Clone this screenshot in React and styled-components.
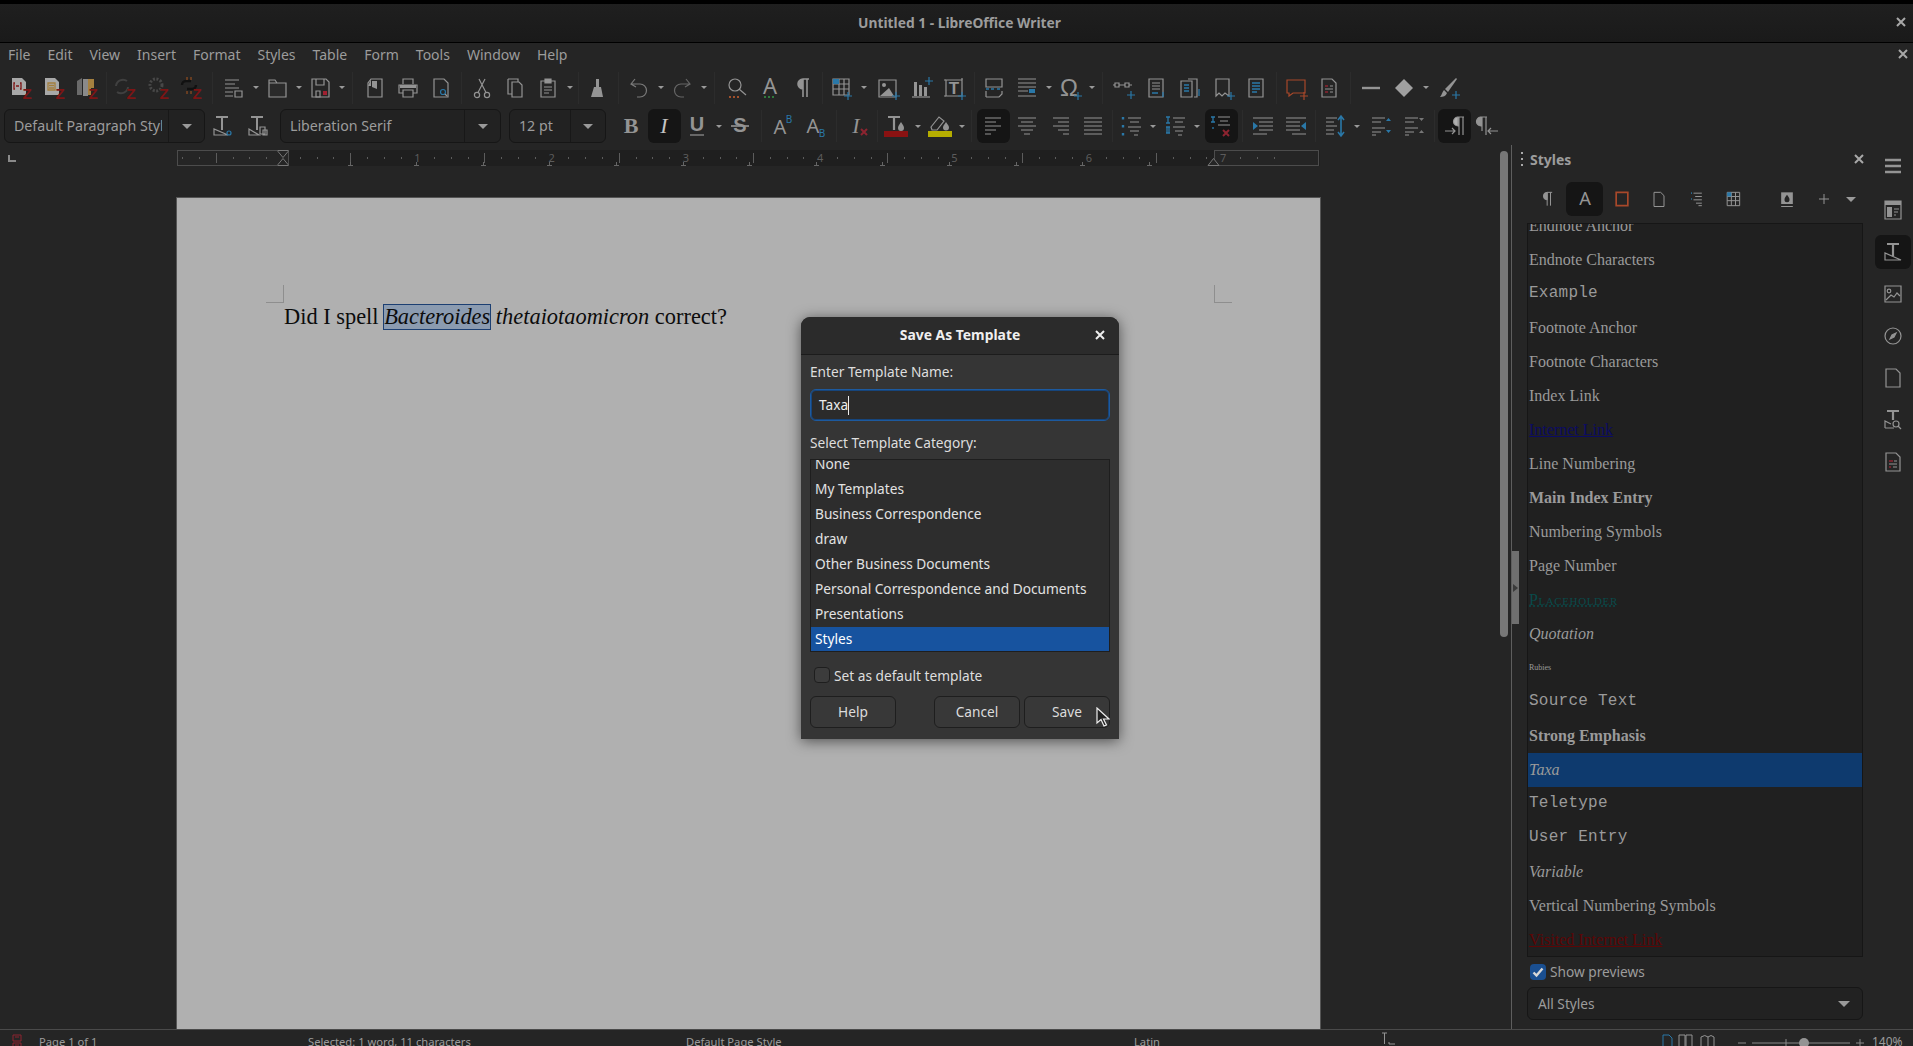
import styled, { createGlobalStyle } from "styled-components";

const UI_FONT = '"Noto Sans", "Open Sans", sans-serif';
const SERIF = '"Liberation Serif", serif';
const MONO = '"Liberation Mono", monospace';
const BLUE = "#2a78a8";
const RED = "#7d1414";
const TXT = "#9c9c9c";

const Global = createGlobalStyle`
  html, body { margin: 0; padding: 0; background: #252525; overflow: hidden; }
  body { font-family: ${UI_FONT}; color: ${TXT}; }
`;

const Shell = styled.div`
  position: relative;
  width: 1913px;
  height: 1046px;
  display: flex;
  flex-direction: column;
  overflow: hidden;
  background: #252525;
`;

const TitleBar = styled.div`
  height: 36px;
  box-sizing: content-box;
  border-top: 4px solid #000;
  border-bottom: 1px solid #000;
  background: linear-gradient(#1f1f1f, #1a1a1a);
  display: grid;
  grid-template-columns: 1fr auto 1fr;
  align-items: center;
  font-size: 13.8px;
  font-weight: 700;
  padding: 0 7px 2px 13px;
  margin-bottom: -2px;
`;
const CloseGlyph = styled.svg`
  width: 10px;
  height: 10px;
  stroke: ${(p) => p.$color || "#a8a8a8"};
  stroke-width: 2;
  justify-self: end;
  flex: none;
`;
const Cross = ({ color }) => (
  <CloseGlyph $color={color} viewBox="0 0 10 10"><path d="M1 1l8 8M9 1l-8 8" /></CloseGlyph>
);

const MenuBar = styled.div`
  height: 27px;
  box-sizing: border-box;
  padding: 0 5px 1px 8px;
  display: flex;
  align-items: center;
  gap: 17px;
  font-size: 14px;
`;
const MenuEnd = styled.div`
  margin-left: auto;
  display: flex;
`;

const ToolRow = styled.div`
  height: ${(p) => p.$h}px;
  display: flex;
  align-items: center;
  padding-left: ${(p) => p.$pad}px;
`;
const Slot = styled.div`
  width: ${(p) => p.$w || 33}px;
  height: 34px;
  flex: none;
  display: flex;
  align-items: center;
  justify-content: center;
  border-radius: 6px;
  background: ${(p) => (p.$on ? "#151515" : "transparent")};
`;
const Tri = styled.span`
  width: 0;
  height: 0;
  flex: none;
  border-left: ${(p) => p.$s || 4}px solid transparent;
  border-right: ${(p) => p.$s || 4}px solid transparent;
  border-top: ${(p) => p.$s || 4}px solid ${(p) => p.$color || "#9a9a9a"};
`;
const Drop = styled.div`
  width: 10px;
  flex: none;
  display: flex;
  justify-content: center;
`;
const Sep = styled.div`
  width: ${(p) => p.$w}px;
  flex: none;
  height: 32px;
  position: relative;
  display: flex;
  justify-content: center;
  &::after {
    content: "";
    width: 1px;
    background: ${(p) => (p.$line ? "#2c2c2c" : "transparent")};
  }
`;
const Combo = styled.div`
  width: ${(p) => p.$w}px;
  height: 34px;
  flex: none;
  box-sizing: border-box;
  display: flex;
  margin-left: ${(p) => p.$ml || 0}px;
  margin-right: ${(p) => p.$mr || 0}px;
  background: #222;
  border: 1px solid #161616;
  border-radius: 6px;
  font-size: 14.2px;
`;
const ComboText = styled.div`
  flex: 1;
  min-width: 0;
  margin-left: 9px;
  margin-right: 6px;
  line-height: 32px;
  white-space: nowrap;
  overflow: hidden;
`;
const ComboArrow = styled.div`
  width: ${(p) => p.$w}px;
  flex: none;
  border-left: 1px solid #181818;
  display: flex;
  align-items: center;
  justify-content: center;
`;

const Workspace = styled.div`
  flex: 1;
  min-height: 0;
  display: flex;
`;
const DocColumn = styled.div`
  width: 1497px;
  flex: none;
  display: flex;
  flex-direction: column;
  overflow: hidden;
`;
const RulerRow = styled.div`
  height: 16px;
  margin-top: 5px;
  display: flex;
  align-items: flex-start;
`;
const TabCorner = styled.div`
  width: 6px;
  height: 5px;
  margin: 5px 161px 0 8px;
  border-left: 2px solid #8a8a8a;
  border-bottom: 2px solid #8a8a8a;
  flex: none;
`;
const Page = styled.div`
  position: relative;
  margin: 31px 0 0 176px;
  width: 1145px;
  flex: 1;
  box-sizing: border-box;
  background: #b0b0b0;
  border: 1px solid #555;
  border-bottom: 0;
  padding: 105px 0 0 107px;
  font: 22.4px/26px ${SERIF};
  color: #0c0c0c;
`;
const Corner = styled.div`
  position: absolute;
  top: 87px;
  left: ${(p) => p.$left}px;
  width: 18px;
  height: 18px;
  border-bottom: 1px solid #8e8e8e;
  ${(p) => (p.$side === "l" ? "border-right" : "border-left")}: 1px solid #8e8e8e;
  box-sizing: border-box;
`;
const DocLine = styled.div`
  white-space: nowrap;
  margin-top: 1px;
`;
const Selected = styled.em`
  background: #8b9bb0;
  outline: 1px solid #1c3f72;
  outline-offset: -1px;
  padding: 0 1px;
  margin: 0 -1px;
  display: inline-block;
  height: 26px;
`;

const ScrollTrack = styled.div`
  width: 14px;
  flex: none;
  padding: 6px 3px 0;
  box-sizing: border-box;
`;
const ScrollThumb = styled.div`
  width: 8px;
  height: 486px;
  background: #777;
  border-radius: 4px;
`;

const Sidebar = styled.div`
  position: relative;
  width: 362px;
  flex: none;
  box-sizing: border-box;
  border-left: 1px solid #5e5e5e;
  padding: 0 10px 0 15px;
  display: flex;
  flex-direction: column;
`;
const Sash = styled.div`
  position: absolute;
  left: 0;
  top: 406px;
  width: 7px;
  height: 73px;
  background: #6f6f6f;
  display: flex;
  align-items: center;
  &::after {
    content: "";
    border-left: 5px solid #3a3a3a;
    border-top: 4px solid transparent;
    border-bottom: 4px solid transparent;
    margin-left: 1px;
  }
`;
const PanelHead = styled.div`
  height: 30px;
  box-sizing: border-box;
  display: flex;
  align-items: center;
  margin-left: -6px;
  padding-bottom: 2px;
  font-size: 14px;
  font-weight: 700;
`;
const Grip = styled.div`
  width: 2px;
  height: 14px;
  margin-right: 7px;
  background: repeating-linear-gradient(#aaa 0 2px, transparent 2px 6px);
`;
const PanelClose = styled.div`
  margin-left: auto;
  margin-right: -1px;
  display: flex;
`;
const StyleTools = styled.div`
  height: 48px;
  padding-top: 7px;
  box-sizing: border-box;
  display: flex;
  margin-left: 2px;
`;
const StyleSlot = styled(Slot)`
  width: ${(p) => p.$w || 37}px;
  height: 34px;
  margin-left: ${(p) => p.$ml || 0}px;
`;
const StyleList = styled.div`
  height: 734px;
  flex: none;
  box-sizing: border-box;
  border: 1px solid #161616;
  background: #202020;
  overflow: hidden;
`;
const StyleListInner = styled.div`
  margin-top: -15px;
`;
const StyleRow = styled.div`
  height: 34px;
  line-height: 33px;
  padding-left: 1px;
  white-space: nowrap;
  font-family: ${(p) => (p.$mono ? MONO : SERIF)};
  font-size: ${(p) => p.$size || 16}px;
  letter-spacing: ${(p) => (p.$mono ? "0.25px" : p.$caps ? "0.6px" : "0")};
  font-weight: ${(p) => (p.$bold ? 700 : 400)};
  font-style: ${(p) => (p.$italic ? "italic" : "normal")};
  font-variant: ${(p) => (p.$caps ? "small-caps" : "normal")};
  color: ${(p) => p.$color || "#9a9a9a"};
  text-decoration: ${(p) => p.$deco || "none"};
  background: ${(p) => (p.$on ? "#0e3a6e" : "transparent")};
`;
const PreviewRow = styled.label`
  height: 29px;
  display: flex;
  align-items: center;
  gap: 4px;
  padding-left: 3px;
  margin-bottom: 1px;
  font-size: 13.7px;
`;
const CheckOn = styled.span`
  width: 16px;
  height: 16px;
  border-radius: 4px;
  background: #1a4f91;
  display: flex;
  align-items: center;
  justify-content: center;
`;
const FilterBox = styled.div`
  height: 33px;
  box-sizing: border-box;
  border: 1px solid #161616;
  border-radius: 6px;
  background: #222;
  display: flex;
  align-items: center;
  justify-content: space-between;
  padding: 0 12px 0 10px;
  font-size: 13.7px;
`;

const Deck = styled.div`
  flex: 1;
  display: flex;
  flex-direction: column;
  align-items: center;
  padding-top: 4px;
  gap: 8px;
`;
const DeckItem = styled.div`
  width: 36px;
  height: 34px;
  flex: none;
  margin-bottom: ${(p) => p.$mb || 0}px;
  border-radius: 6px;
  display: flex;
  align-items: center;
  justify-content: center;
  background: ${(p) => (p.$on ? "#151515" : "transparent")};
`;

const StatusBar = styled.div`
  height: 17px;
  flex: none;
  box-sizing: border-box;
  border-top: 1px solid #4a4a4a;
  display: grid;
  grid-template-columns: 308px 378px 448px 247px 272px 75px 144px 41px;
  overflow: hidden;
  font-size: 11.2px;
  line-height: 24px;
`;
const StatusCell = styled.div`
  display: flex;
  align-items: flex-start;
  white-space: nowrap;
  padding-left: ${(p) => p.$pad || 0}px;
  gap: ${(p) => p.$gap || 0}px;
`;
const ZoomValue = styled.span`
  color: ${TXT};
  font-size: 12px;
`;

// dialog floats over the dimmed window
const Dialog = styled.div`
  position: absolute;
  left: 801px;
  top: 317px;
  width: 318px;
  height: 422px;
  box-sizing: border-box;
  background: #353535;
  border-radius: 9px 9px 0 0;
  box-shadow: 0 2px 14px rgba(0, 0, 0, 0.55);
  color: #dedede;
  font-size: 13.7px;
  display: flex;
  flex-direction: column;
`;
const DialogHead = styled.div`
  height: 38px;
  flex: none;
  box-sizing: border-box;
  background: #2b2b2b;
  border-bottom: 1px solid #1c1c1c;
  border-radius: 9px 9px 0 0;
  display: grid;
  grid-template-columns: 1fr auto 1fr;
  align-items: center;
  padding: 0 14px 2px 14px;
  font-size: 13.9px;
  font-weight: 700;
  color: #efefef;
`;
const DialogBody = styled.div`
  flex: 1;
  padding: 8px 9px 10px 9px;
  display: flex;
  flex-direction: column;
`;
const FieldLabel = styled.div`
  height: 20px;
  line-height: 18px;
  margin-bottom: ${(p) => p.$mb}px;
`;
const NameEntry = styled.div`
  height: 32px;
  box-sizing: border-box;
  border: 1px solid #1d5a9f;
  box-shadow: inset 0 0 0 1px #16457c;
  border-radius: 6px;
  background: #2b2b2b;
  padding-left: 8px;
  line-height: 29px;
  margin-bottom: 13px;
  color: #ececec;
  display: flex;
`;
const Caret = styled.span`
  width: 1px;
  height: 19px;
  margin-top: 6px;
  background: #eee;
`;
const CategoryList = styled.div`
  height: 193px;
  box-sizing: border-box;
  border: 1px solid #1e1e1e;
  background: #2d2d2d;
  overflow: hidden;
  margin-bottom: 15px;
`;
const CategoryInner = styled.div`
  margin-top: -8px;
`;
const CategoryRow = styled.div`
  height: 25px;
  line-height: 24px;
  padding-left: 4px;
  white-space: nowrap;
  background: ${(p) => (p.$on ? "#17539f" : "transparent")};
  color: ${(p) => (p.$on ? "#fff" : "#e2e2e2")};
`;
const CheckLine = styled.div`
  height: 16px;
  display: flex;
  align-items: center;
  gap: 4px;
  padding-left: 4px;
  margin-bottom: 13px;
`;
const CheckOff = styled.span`
  width: 16px;
  height: 16px;
  box-sizing: border-box;
  border: 1px solid #1e1e1e;
  border-radius: 4px;
  background: #3c3c3c;
`;
const ButtonRow = styled.div`
  display: flex;
  gap: 4px;
`;
const DialogButton = styled.div`
  position: relative;
  width: ${(p) => p.$w}px;
  margin-right: ${(p) => p.$mr || 0}px;
  height: 32px;
  box-sizing: border-box;
  border: 1px solid #1e1e1e;
  border-radius: 6px;
  background: #383838;
  text-align: center;
  line-height: 29px;
  color: #dcdcdc;
`;
const Pointer = styled.svg`
  position: absolute;
  left: 71px;
  top: 10px;
  width: 14px;
  height: 20px;
`;

const Ico = styled.svg`
  width: ${(p) => p.$size || 24}px;
  height: ${(p) => p.$size || 24}px;
  flex: none;
  fill: none;
  stroke: ${(p) => p.$stroke || "#949494"};
  stroke-width: 1.2;
  overflow: visible;
`;

const INK = "#949494";
const Letter = ({ x = 12, y = 18, s = 18, c = INK, w = 400, i, f = SERIF, children }) => (
  <text x={x} y={y} fontSize={s} fill={c} stroke="none" fontWeight={w} fontStyle={i ? "italic" : "normal"} fontFamily={f} textAnchor="middle">{children}</text>
);
const Zed = () => <Letter x={18} y={23} s={15} w={700} c={RED} f='"Liberation Sans", sans-serif'>Z</Letter>;
const Plus = ({ x = 20, y = 20, c = BLUE }) => <path d={`M${x - 4} ${y}h8M${x} ${y - 4}v8`} stroke={c} />;
const L = ({ d, c = BLUE, w = 1.3 }) => <path d={d} stroke={c} strokeWidth={w} />;

const ICONS = {
  zcite: <><path d="M3 2h10l4 4v13H3z" fill="#a8a8a8" stroke="none" /><L d="M6 7H5v6h1M11 7h1v6h-1M7 10h3" c="#7d1414" /><Zed /></>,
  zbib: <><path d="M3 2h10l4 4v13H3z" fill="#a8a8a8" stroke="none" /><L d="M6 7h7v7H6zM7 9.5h5M7 12h5" c="#a37e3c" /><Zed /></>,
  zdoc: <><path d="M2 5l5-3v17H2z" fill="#6a6a6a" stroke="none" /><path d="M8 3h5v17H8z" fill="#8a8a8a" stroke="none" /><path d="M13 3h6v9h-3v7h-3z" fill="#a5803f" stroke="none" /><Zed /></>,
  zrefresh: <><path d="M3 10a7 7 0 0 1 11-5M15 11a7 7 0 0 1-11 5" stroke="#404040" strokeWidth="2" /><Zed /></>,
  zprefs: <><circle cx="10" cy="9" r="6" stroke="#484848" strokeWidth="3" strokeDasharray="2 1.5" /><Zed /></>,
  zunlink: <><path d="M3 9a4 4 0 0 1 4-4h5M17 9a4 4 0 0 1-4 4H8" stroke="#111" strokeWidth="2.4" /><L d="M8 1v3M12 1v3M8 15v3M12 15v3" c="#8a4a20" /><Zed /></>,
  styles: <path d="M3 4h14M3 8h10M3 12h14M3 16h8M3 20h8M13 15h7v6h-7z" />,
  open: <path d="M4 4h6l2 3h9v14H4zM4 7h8" fill="#2a2a2a" />,
  save: <><path d="M4 3h14l3 3v15H4zM8 3v6h8V3" /><path d="M8 15h4v6H8z" /><rect x="15" y="15" width="4" height="4" fill="#a02030" stroke="none" /></>,
  pdf: <><path d="M8 3h11v18H5V7z" /><path d="M8 3v7H5l3-7zM9 5h5v8l-5-2z" fill={INK} stroke="none" /></>,
  print: <><path d="M7 8V3h10v5M7 17H3V9h18v8h-4M7 14h10v7H7z" /><path d="M4 9h16v3H4z" fill={INK} stroke="none" /></>,
  preview: <><path d="M5 3h10l4 4v14H5z" /><circle cx="14" cy="16" r="2.5" stroke={BLUE} /><path d="M16 18l2 2" /></>,
  cut: <><circle cx="7" cy="19" r="2.6" /><circle cx="17" cy="19" r="2.6" /><path d="M8 16.5L15 3M16 16.5L9 3" /></>,
  copy: <path d="M5 3h10v3M5 3v15h4M9 6h7l3 3v12H9z" />,
  paste: <><path d="M5 5h14v16H5z" /><path d="M9 3h6v4H9z" fill={INK} /><path d="M8 11h8M8 14h8M8 17h5" /></>,
  clone: <><path d="M10 3h3v8h-3z" fill={INK} stroke="none" /><path d="M8 11h7l2 10H5z" fill={INK} stroke="none" /></>,
  undo: <path d="M8 3L4 8l5 3M4 8h9a6 6 0 0 1 0 13h-3" stroke="#7a7a7a" />,
  redo: <path d="M16 3l4 5-5 3M20 8h-9a6 6 0 0 0 0 13h3" stroke="#666" />,
  find: <><circle cx="10" cy="9" r="6" /><path d="M14 13l7 6" /><L d="M4 21h2M8 21h2M12 21h2" c="#a0502c" w={2} /></>,
  charfmt: <><Letter y={18} s={22} f={UI_FONT}>A</Letter><L d="M6 21h2M10 21h2M14 21h2" c="#2f7a3c" w={2} /></>,
  pilcrow: <path d="M12 3h6M12 3v18M16 3v18M12 3a5 5 0 0 0 0 10z" fill={INK} strokeWidth="1.6" />,
  table: <><path d="M3 3h16v16H3zM3 8h16M3 13h16M9 3v16M14 3v16" /><rect x="3" y="3" width="6" height="5" fill={BLUE} stroke="none" /><Plus x={18} y={20} /></>,
  image: <><path d="M3 4h17v17H3z" /><circle cx="8" cy="9" r="2" fill={INK} stroke="none" /><path d="M4 20l9-8 5 8z" fill={INK} stroke="none" /><Plus x={20} y={20} /></>,
  chart: <><path d="M3 21h18" /><path d="M5 6h3v14H5zM10 9h3v11h-3zM15 11h3v9h-3z" fill={INK} stroke="none" /><Plus x={20} y={5} /></>,
  textbox: <><path d="M4 4h16v16H4z" /><path d="M2 4h2M20 2v2M2 20h2" /><Letter y={18} s={17} w={700} f='"Liberation Sans", sans-serif'>T</Letter><Plus x={20} y={20} /></>,
  pagebreak: <><path d="M4 3h16v8H4zM4 21V15M20 15v3l-3 3H4" /><L d="M4 13h3M9 13h3M15 13h3" /></>,
  field: <><path d="M3 3h18M3 7h18M3 11h18M3 15h10M3 20h18" /><rect x="14" y="13" width="6" height="4" fill={BLUE} stroke="none" /></>,
  omega: <><Letter x={11} y={20} s={24} f='"Liberation Sans", sans-serif'>Ω</Letter><Plus x={20} y={20} /></>,
  hyperlink: <><path d="M3 7h4v4H3zM13 7h4v4h-4zM7 9h6M1 9h2M17 9h3" /><Plus x={19} y={19} /></>,
  footnote: <><path d="M4 3h14v18H4zM7 7h8M7 10h8M7 13h8" /><L d="M7 17h6M18 16v5" /></>,
  endnote: <><path d="M10 3h9v18h-3M3 5h11v16H3z" /><L d="M6 9h5M6 12h5M6 15h5M21 13v7" /></>,
  bookmark: <><path d="M5 3h13v17l-4-3-3 3-3-3-3 3z" /><Plus x={20} y={20} /></>,
  crossref: <><path d="M5 3h14v18H5z" /><L d="M8 7h8M8 10h8M8 13h8M8 16h5" /></>,
  comment: <><path d="M3 4h18v13H9l-4 3v-3H3z" stroke="#a8482a" /><Plus x={20} y={20} c="#a8482a" /></>,
  track: <><path d="M5 3h10l4 4v14H5z" /><L d="M8 10h3M8 16h3" c="#8d2430" /><path d="M13 10h3M13 16h3M8 13h8" /></>,
  line: <path d="M3 12h18" strokeWidth="2.4" />,
  diamond: <path d="M12 3l9 9-9 9-9-9z" fill="#a0a0a0" stroke="none" />,
  brush: <><path d="M20 2L9 13l3 3L21 3z" fill={INK} stroke="none" /><path d="M8 14l3 3c-1 3-4 4-7 4 2-2 2-5 4-7z" fill={INK} stroke="none" /><Plus x={20} y={19} /></>,
  t1: <><path d="M5 3h12M11 3v13" strokeWidth="2" /><path d="M3 21h14L3 15z" /><circle cx="18" cy="19" r="2" stroke={BLUE} /></>,
  t2: <><path d="M5 3h12M11 3v13" strokeWidth="2" /><path d="M3 21h10L3 15z" /><path d="M14 13h5v7h-5zM17 16h4v5h-4z" /></>,
  bold: <Letter y={19} s={22} w={700}>B</Letter>,
  italic: <Letter y={19} s={22} i c="#c4c4c4">I</Letter>,
  under: <><Letter y={17} s={20} w={700} f='"Liberation Sans", sans-serif'>U</Letter><path d="M5 21h14" /></>,
  strike: <><Letter y={18} s={20} w={700} f='"Liberation Sans", sans-serif'>S</Letter><path d="M3 12h18" strokeWidth="1.6" /></>,
  sup: <><Letter x={10} y={20} s={20} f={UI_FONT}>A</Letter><Letter x={19} y={9} s={10} c={BLUE} f={UI_FONT}>B</Letter></>,
  sub: <><Letter x={10} y={19} s={20} f={UI_FONT}>A</Letter><Letter x={19} y={23} s={10} c={BLUE} f={UI_FONT}>B</Letter></>,
  clear: <><Letter x={10} y={19} s={22} i>I</Letter><L d="M15 15l6 6M21 15l-6 6" c="#8d2430" w={2} /></>,
  color: <><path d="M4 3h12M10 3v13" strokeWidth="2.2" /><path d="M17 8c2 3 3 4 3 6a3 3 0 0 1-6 0c0-2 1-3 3-6z" fill={INK} stroke="none" /><rect x="0" y="17" width="24" height="6" fill="#8a1212" stroke="none" /></>,
  marker: <><path d="M3 13L11 3l5 4-7 9H4z" /><path d="M18 8c2 3 3 4 3 5.500a3 3 0 0 1-6 0c0-1.500 1-2.500 3-5.500z" fill={INK} stroke="none" /><rect x="0" y="17" width="24" height="6" fill="#b5ad00" stroke="none" /></>,
  aleft: <path d="M3 4h16M3 8h11M3 12h16M3 16h11M3 20h6" />,
  acenter: <path d="M3 4h18M6 8h12M3 12h18M6 16h12M9 20h6" />,
  aright: <path d="M5 4h16M10 8h11M5 12h16M10 16h11M15 20h6" />,
  ajust: <path d="M3 4h18M3 8h18M3 12h18M3 16h18M3 20h18" />,
  bullets: <><path d="M8 4h13M10 8h9M8 13h13M10 17h9M14 21h4" /><L d="M3 3v2.500M3 11v2.500M3 19v2.500" w={2.4} /></>,
  number: <><path d="M9 4h12M11 8h8M9 13h12M11 17h8M14 21h4" /><L d="M2 3h4M4 3v6M2 9h4M2 13h4M3 13v6M5 13v6M2 19h4" /></>,
  outline: <><path d="M9 3h12M11 7h8M9 11h12" /><L d="M2 3h4M4 3v5M2 8h4M4 13v2" /><L d="M14 16l6 6M20 16l-6 6" c="#8d2430" w={2} /></>,
  indent: <><path d="M2 4h20M8 8h14M8 12h14M8 16h14M2 20h14" /><path d="M2 8l5 4-5 4z" fill={BLUE} stroke="none" /></>,
  outdent: <><path d="M2 4h20M2 8h14M2 12h14M2 16h14M8 20h14" /><path d="M22 8l-5 4 5 4z" fill={BLUE} stroke="none" /></>,
  spacing: <><path d="M3 4h11M3 8h8M3 12h11M3 16h8M3 20h8" /><L d="M18 3v18M15 6l3-4 3 4M15 18l3 4 3-4" w={1.6} /></>,
  incp: <><path d="M3 4h13M3 8h9M3 14h13M3 18h9M3 21h4" /><path d="M17 7l2.500-3L22 7zM17 16l2.500 3 2.500-3z" fill={BLUE} stroke="none" /></>,
  decp: <><path d="M3 4h13M3 8h9M3 14h13M3 18h9M3 21h4" /><path d="M17 4l2.500 3L22 4zM17 19l2.500-3 2.500 3z" fill="#777" stroke="none" /></>,
  ltr: <><path d="M14 3h7M16 3v18M20 3v18M15 3a4 4 0 0 0 0 9z" fill="#b0b0b0" /><path d="M2 17h10M9 14l3 3-3 3" /></>,
  rtl: <><path d="M4 3h7M6 3v14M10 3v18M5 3a4 4 0 0 0 0 9z" fill={INK} /><path d="M22 17H12M15 14l-3 3 3 3" /></>,
  para: <path d="M11 4h6M11 4v16M15 4v16M11 4a4.500 4.500 0 0 0 0 9z" fill={INK} />,
  charA: <Letter y={19} s={20} f={UI_FONT}>A</Letter>,
  frame: <path d="M5 4h14v16H5z" stroke="#a8482a" strokeWidth="2" />,
  pageS: <path d="M6 4h8l4 4v13H6z" />,
  listS: <><path d="M9 5h10M11 9h8M9 13h10M12 17h7M15 20h4" /><L d="M6 5h1M6 12h1" w={2} /></>,
  gridS: <><path d="M5 4h15v16H5zM5 9h15M5 14h15M10 4v16M15 4v16" /><rect x="5" y="4" width="5" height="5" fill={BLUE} stroke="none" /></>,
  fill: <><path d="M5 4h14v14H5z" fill={INK} stroke="none" /><path d="M12 7c2 3 3 4 3 6a3 3 0 0 1-6 0c0-2 1-3 3-6z" fill="#252525" stroke="none" /><path d="M5 21h14" /></>,
  plusS: <path d="M6 12h12M12 6v12" />,
  burger: <path d="M4 6h16M4 12h16M4 18h16" strokeWidth="2.4" />,
  props: <><path d="M4 3h16v18H4z" /><path d="M4 3h16v4H4zM6 9h5v10H6z" fill={INK} stroke="none" /><path d="M13 11h5M13 14h4M13 17h2" /></>,
  deckT: <><path d="M6 4h12M12 4v12" strokeWidth="2.2" /><path d="M4 20h16L4 13z" /></>,
  deckPic: <><path d="M4 4h16v16H4z" /><circle cx="8" cy="9" r="1.800" /><path d="M5 18l5-5 3 2 3-4 3 3" /></>,
  compass: <><circle cx="12" cy="12" r="8" /><path d="M9 15l2-4 4-2-2 4z" fill={INK} /></>,
  deckPage: <path d="M5 3h10l4 4v14H5z" />,
  deckFind: <><path d="M6 3h12M12 3v9" strokeWidth="2.2" /><path d="M4 20h9M4 20v-7l6 3" /><circle cx="15" cy="16" r="3" /><path d="M17 18l3 3" /></>,
  deckTrack: <><path d="M5 3h10l4 4v14H5z" /><L d="M8 11h4M8 17h2" c="#8d2430" /><path d="M13 11h3M12 17h4M8 14h8" /></>,
};

const Icon = ({ name, size }) => (
  <Ico $size={size} viewBox="0 0 24 24">{ICONS[name]}</Ico>
);

// tokens: icon name, "*name" = pressed, "v" = dropdown arrow, number = gap (negative has no divider)
const TOOLS_TOP = [
  "zcite", "zbib", "zdoc", 5, "zrefresh", "zprefs", "zunlink", 10,
  "styles", "v", "open", "v", "save", "v", 12, "pdf", "print", "preview", 8,
  "cut", "copy", "paste", "v", 7, "clone", 8, "undo", "v", "redo", "v", 12,
  "find", "charfmt", "pilcrow", 6, "table", "v", -3, "image", "chart", "textbox", 7,
  "pagebreak", "field", "v", "omega", "v", 11,
  "hyperlink", "footnote", "endnote", "bookmark", "crossref", 7, "comment", "track", 9,
  "line", "diamond", "v", -1, "brush",
];
const TOOLS_FORMAT = [
  "bold", "*italic", "under", "v", "strike", 9, "sup", "sub", 10, "clear", 5,
  "color", "v", -1, "marker", "v", 10.5, "*aleft", "acenter", "aright", "ajust", 6,
  "bullets", "v", -1, "number", "v", -2.5, "*outline", 9, "indent", "outdent", 6,
  "spacing", "v", -2.5, "incp", "decp", 8, "*ltr", "rtl",
];

const Tools = ({ items }) =>
  items.map((t, i) => {
    if (typeof t === "number") return <Sep key={i} $w={Math.abs(t)} $line={t > 0} />;
    if (t === "v") return <Drop key={i}><Tri $s={3.5} /></Drop>;
    const on = t[0] === "*";
    return <Slot key={i} $on={on}><Icon name={on ? t.slice(1) : t} /></Slot>;
  });

const RULER_W = 1143;
const X0 = 106;
const Ruler = () => {
  const dots = [];
  for (let i = -6; i < 60; i++) {
    const x = X0 + i * 16.79;
    if (x > 0 && x < RULER_W - 3 && i % 8 !== 0) dots.push({ x, long: Math.abs(i % 8) === 4 });
  }
  const tabs = [1, 2, 3, 4, 5, 6, 7, 8, 9, 10, 11, 12, 13].map((n) => X0 + n * 66.6);
  return (
    <svg width={RULER_W} height="16" viewBox={`0 0 ${RULER_W} 16`}>
      <rect x="0" y="0" width={RULER_W} height="16" fill="#1f1f1f" />
      <rect x="0.5" y="0.5" width={X0 + 5} height="15" fill="#252525" stroke="#4c4c4c" />
      <rect x="1037.5" y="0.5" width="104" height="15" fill="#252525" stroke="#4c4c4c" />
      {dots.map((d, i) => <rect key={i} x={Math.round(d.x)} y={d.long ? 3 : 7} width="1" height={d.long ? 10 : 2} fill="#5c5c5c" />)}
      {tabs.map((x, i) => <path key={i} d={`M${Math.round(x) + 0.5} 12v3M${Math.round(x) - 2} 15.500h5`} stroke="#666" />)}
      {[1, 2, 3, 4, 5, 6, 7].map((n) => (
        <text key={n} x={X0 + n * 134.3} y="12" fontSize="11" fill="#5c5c5c" textAnchor="middle" fontFamily={UI_FONT}>{n}</text>
      ))}
      <path d={`M${X0 - 5} 0.500h10v1l-5 6-5-6zM${X0 - 5} 15.500h10v-1l-5-6-5 6z`} fill="#252525" stroke="#777" />
      <path d="M1031 15.500h11l-5.500-7z" fill="#252525" stroke="#777" />
    </svg>
  );
};

const STYLE_ROWS = [
  { t: "Endnote Anchor" },
  { t: "Endnote Characters" },
  { t: "Example", mono: true },
  { t: "Footnote Anchor" },
  { t: "Footnote Characters" },
  { t: "Index Link" },
  { t: "Internet Link", color: "#0b0b62", deco: "underline" },
  { t: "Line Numbering" },
  { t: "Main Index Entry", bold: true },
  { t: "Numbering Symbols" },
  { t: "Page Number" },
  { t: "Placeholder", caps: true, color: "#0a4a4a", deco: "underline dotted" },
  { t: "Quotation", italic: true },
  { t: "Rubies", size: 8 },
  { t: "Source Text", mono: true },
  { t: "Strong Emphasis", bold: true },
  { t: "Taxa", italic: true, on: true },
  { t: "Teletype", mono: true },
  { t: "User Entry", mono: true },
  { t: "Variable", italic: true },
  { t: "Vertical Numbering Symbols" },
  { t: "Visited Internet Link", color: "#5c0606", deco: "underline" },
];

const MENUS = ["File", "Edit", "View", "Insert", "Format", "Styles", "Table", "Form", "Tools", "Window", "Help"];
const CATEGORIES = ["None", "My Templates", "Business Correspondence", "draw", "Other Business Documents", "Personal Correspondence and Documents", "Presentations", "Styles"];
const DECK = [["burger", 2], ["props"], ["deckT", 0, true], ["deckPic"], ["compass"], ["deckPage"], ["deckFind"], ["deckTrack"]];

export default function App() {
  return (
    <Shell>
      <Global />
      <TitleBar>
        <span />
        <span>Untitled 1 - LibreOffice Writer</span>
        <Cross />
      </TitleBar>
      <MenuBar>
        {MENUS.map((m) => <span key={m}>{m}</span>)}
        <MenuEnd><Cross /></MenuEnd>
      </MenuBar>
      <ToolRow $h={39} $pad={4.5}><Tools items={TOOLS_TOP} /></ToolRow>
      <ToolRow $h={38} $pad={4}>
        <Combo $w={201} $mr={1}>
          <ComboText>Default Paragraph Style</ComboText>
          <ComboArrow $w={35}><Tri $s={5} /></ComboArrow>
        </Combo>
        <Slot><Icon name="t1" /></Slot>
        <Sep $w={2} />
        <Slot><Icon name="t2" /></Slot>
        <Combo $w={221} $ml={6}>
          <ComboText>Liberation Serif</ComboText>
          <ComboArrow $w={35}><Tri $s={5} /></ComboArrow>
        </Combo>
        <Combo $w={97} $ml={8} $mr={8.5}>
          <ComboText>12 pt</ComboText>
          <ComboArrow $w={34}><Tri $s={5} /></ComboArrow>
        </Combo>
        <Tools items={TOOLS_FORMAT} />
      </ToolRow>
      <Workspace>
        <DocColumn>
          <RulerRow>
            <TabCorner />
            <Ruler />
          </RulerRow>
          <Page>
            <Corner $side="l" $left={89} />
            <Corner $side="r" $left={1037} />
            <DocLine>
              Did I spell <Selected>Bacteroides</Selected> <em>thetaiotaomicron</em> correct?
            </DocLine>
          </Page>
        </DocColumn>
        <ScrollTrack><ScrollThumb /></ScrollTrack>
        <Sidebar>
          <Sash />
          <PanelHead>
            <Grip />
            Styles
            <PanelClose><Cross /></PanelClose>
          </PanelHead>
          <StyleTools>
            <StyleSlot><Icon name="para" size={20} /></StyleSlot>
            <StyleSlot $on><Icon name="charA" size={22} /></StyleSlot>
            <StyleSlot><Icon name="frame" size={20} /></StyleSlot>
            <StyleSlot><Icon name="pageS" size={20} /></StyleSlot>
            <StyleSlot><Icon name="listS" size={20} /></StyleSlot>
            <StyleSlot><Icon name="gridS" size={20} /></StyleSlot>
            <StyleSlot $ml={17}><Icon name="fill" size={20} /></StyleSlot>
            <StyleSlot><Icon name="plusS" size={20} /></StyleSlot>
            <StyleSlot $w={17}><Tri $s={5} /></StyleSlot>
          </StyleTools>
          <StyleList>
            <StyleListInner>
              {STYLE_ROWS.map((r) => (
                <StyleRow key={r.t} $mono={r.mono} $size={r.size} $bold={r.bold} $italic={r.italic} $caps={r.caps} $color={r.color} $deco={r.deco} $on={r.on}>
                  {r.t}
                </StyleRow>
              ))}
            </StyleListInner>
          </StyleList>
          <PreviewRow>
            <CheckOn>
              <svg width="12" height="12" viewBox="0 0 12 12" fill="none" stroke="#d8d8d8" strokeWidth="2.4"><path d="M1.500 6.500l3 3 6-7" /></svg>
            </CheckOn>
            Show previews
          </PreviewRow>
          <FilterBox>
            All Styles
            <Tri $s={6} />
          </FilterBox>
        </Sidebar>
        <Deck>
          {DECK.map(([n, mb, on]) => (
            <DeckItem key={n} $mb={mb} $on={on}><Icon name={n} /></DeckItem>
          ))}
        </Deck>
      </Workspace>
      <StatusBar>
        <StatusCell $pad={12} $gap={17}>
          <svg width="10" height="16" viewBox="0 0 10 16" fill="none" stroke="#8d2430" style={{ marginTop: 4 }}><path d="M1 1h8v6H1zM1 9h8v6H1zM3 3h4M3 11h4" /></svg>
          Page 1 of 1
        </StatusCell>
        <StatusCell>Selected: 1 word, 11 characters</StatusCell>
        <StatusCell>Default Page Style</StatusCell>
        <StatusCell>Latin</StatusCell>
        <StatusCell>
          <svg width="14" height="16" viewBox="0 0 14 16" fill="none" stroke="#949494"><path d="M1 3h5M3.500 3v11M8 12v2h6" /></svg>
        </StatusCell>
        <StatusCell $pad={8} $gap={5}>
          <svg width="54" height="16" viewBox="0 0 54 16" fill="none" stroke="#949494" style={{ marginTop: 3 }}>
            <path d="M2 2h6l3 3v11H2z" stroke={BLUE} />
            <path d="M18 2h6v14h-6zM25 2h6v14h-6zM40 4q4-3 7 0q3-3 6 0v12h-13zM47 4v12" />
          </svg>
        </StatusCell>
        <StatusCell>
          <svg width="144" height="16" viewBox="0 0 144 16" fill="none" stroke="#8a8a8a" style={{ marginTop: 4 }}>
            <path d="M10 9h8M24 9h98M58 5v8M128 9h8M132 5v8" />
            <circle cx="76" cy="9" r="5" fill={INK} stroke="none" />
          </svg>
        </StatusCell>
        <StatusCell $pad={0}><ZoomValue>140%</ZoomValue></StatusCell>
      </StatusBar>

      <Dialog>
        <DialogHead>
          <span />
          <span>Save As Template</span>
          <Cross color="#eee" />
        </DialogHead>
        <DialogBody>
          <FieldLabel $mb={6}>Enter Template Name:</FieldLabel>
          <NameEntry>Taxa<Caret /></NameEntry>
          <FieldLabel $mb={5}>Select Template Category:</FieldLabel>
          <CategoryList>
            <CategoryInner>
              {CATEGORIES.map((c) => <CategoryRow key={c} $on={c === "Styles"}>{c}</CategoryRow>)}
            </CategoryInner>
          </CategoryList>
          <CheckLine><CheckOff />Set as default template</CheckLine>
          <ButtonRow>
            <DialogButton $w={86} $mr={34}>Help</DialogButton>
            <DialogButton $w={86}>Cancel</DialogButton>
            <DialogButton $w={86}>
              Save
              <Pointer viewBox="0 0 14 20"><path d="M1 1v15l4-3.500 3 6.500 2.500-1-3-6h5.500z" fill="#222" stroke="#eee" strokeWidth="1.2" /></Pointer>
            </DialogButton>
          </ButtonRow>
        </DialogBody>
      </Dialog>
    </Shell>
  );
}
